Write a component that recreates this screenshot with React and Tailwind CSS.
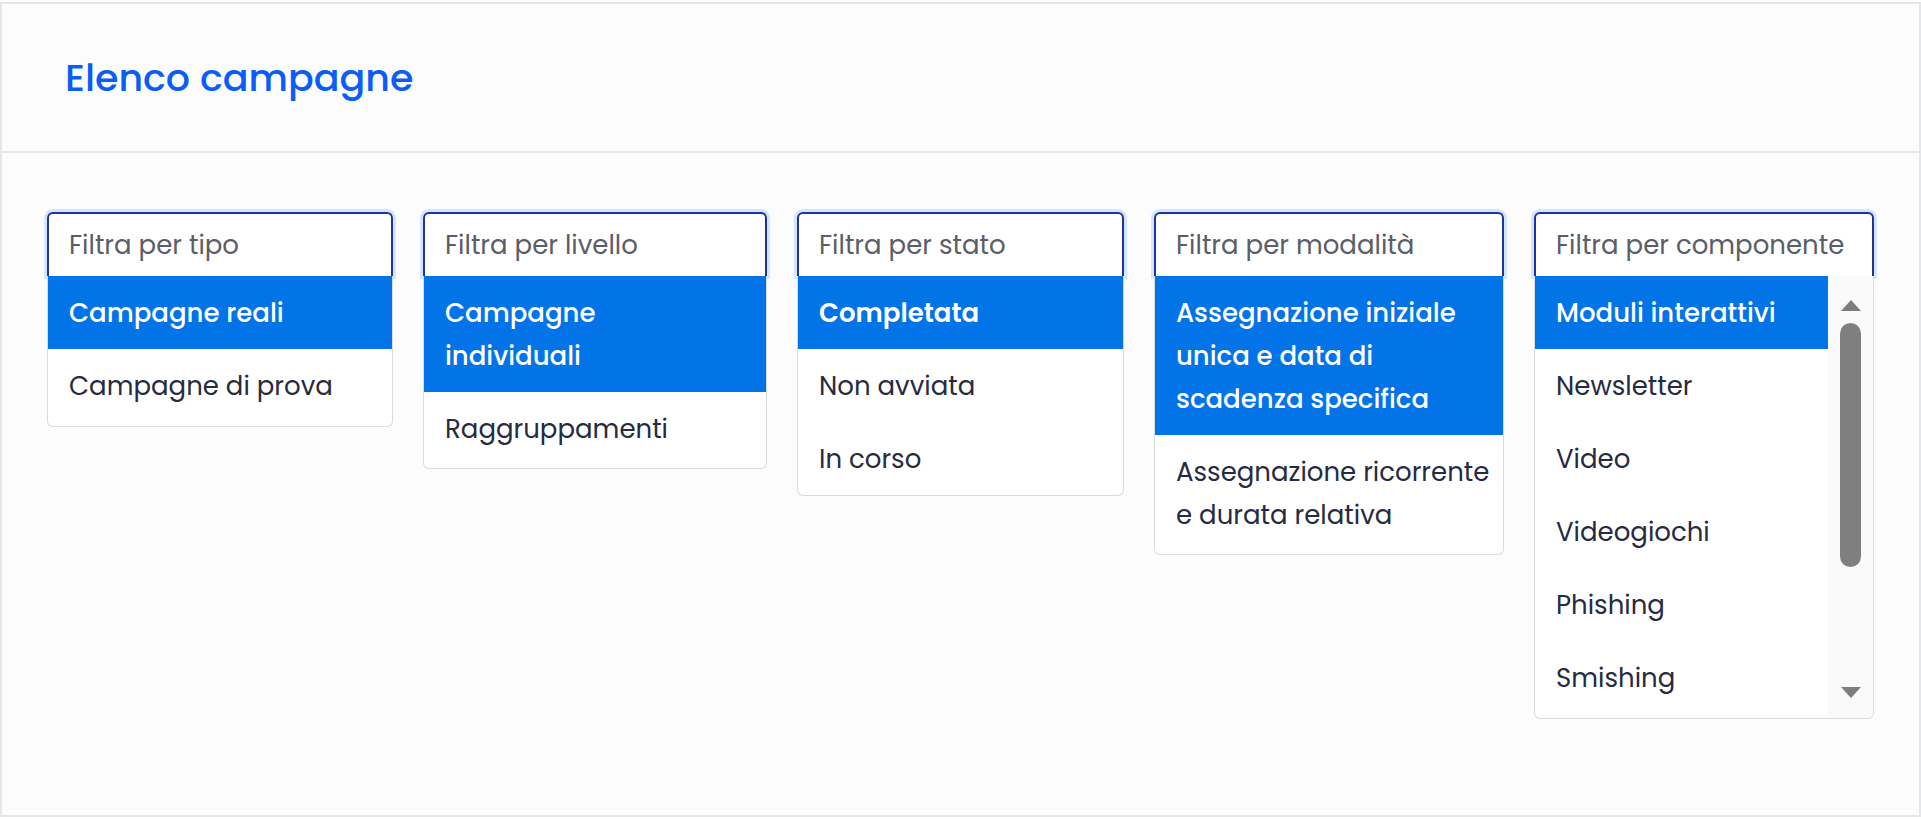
import React from 'react';

const filters = [
    {
        placeholder: 'Filtra per tipo',
        width: 'w-[346px]',
        pad: 'pb-[4px]',
        pr: 'pr-[8px]',
        options: [
            { label: 'Campagne reali', selected: true, weight: 'font-medium' },
            { label: 'Campagne di prova' },
        ],
    },
    {
        placeholder: 'Filtra per livello',
        width: 'w-[344px]',
        pad: 'pb-[3px]',
        pr: 'pr-[32px]',
        options: [
            { label: 'Campagne individuali', selected: true, weight: 'font-medium' },
            { label: 'Raggruppamenti' },
        ],
    },
    {
        placeholder: 'Filtra per stato',
        width: 'w-[327px]',
        pad: 'pb-0',
        pr: 'pr-[8px]',
        options: [
            { label: 'Completata', selected: true, weight: 'font-semibold' },
            { label: 'Non avviata' },
            { label: 'In corso' },
        ],
    },
    {
        placeholder: 'Filtra per modalità',
        width: 'w-[350px]',
        pad: 'pb-[3px]',
        pr: 'pr-[8px]',
        options: [
            { label: 'Assegnazione iniziale unica e data di scadenza specifica', selected: true, weight: 'font-medium' },
            { label: 'Assegnazione ricorrente e durata relativa' },
        ],
    },
];

const componentOptions = [
    { label: 'Moduli interattivi', selected: true, weight: 'font-medium' },
    { label: 'Newsletter' },
    { label: 'Video' },
    { label: 'Videogiochi' },
    { label: 'Phishing' },
    { label: 'Smishing' },
];

const Option = ({ label, selected, weight, pr = 'pr-[8px]' }) => (
    <div
        className={
            selected
                ? `bg-[#0373e8] text-white pl-[21px] ${pr} pt-[16px] pb-[14px] leading-[43px] ${weight}`
                : `text-[#272b42] pl-[21px] ${pr} pt-[16px] pb-[14px] leading-[43px]`
        }
    >
        {label}
    </div>
);

const FilterInput = ({ placeholder }) => (
    <div className="h-[64px] shrink-0 flex items-center px-[20px] bg-white rounded-t-[6px] border-2 border-b-0 border-[#1f31a3] shadow-[0_0_0_3px_#d3e6fb] text-[#5b5e67] whitespace-nowrap">
        {placeholder}
    </div>
);

const FilterList = ({ placeholder, width, pad, pr, options }) => (
    <div className={`${width} flex flex-col`}>
        <FilterInput placeholder={placeholder} />
        <div className={`bg-white border border-t-0 border-[#d8dbe2] rounded-b-[6px] ${pad}`}>
            {options.map((o) => (
                <Option key={o.label} pr={pr} {...o} />
            ))}
        </div>
    </div>
);

const ComponentList = () => (
    <div className="w-[340px] flex flex-col">
        <FilterInput placeholder="Filtra per componente" />
        <div className="h-[443px] bg-white border border-t-0 border-[#d8dbe2] rounded-b-[6px] flex overflow-hidden">
            <div className="flex-1 overflow-hidden">
                {componentOptions.map((o) => (
                    <Option key={o.label} {...o} />
                ))}
            </div>
            {/* scrollbar */}
            <div className="w-[45px] bg-[#fafafa] flex flex-col items-center pt-[24px] pb-[20px]">
                <svg width="20" height="11" viewBox="0 0 20 11">
                    <path d="M10 0 L20 11 L0 11 Z" fill="#7d7d7d" />
                </svg>
                <div className="w-[21px] h-[244px] mt-[12px] rounded-full bg-[#7f7f7f]" />
                <div className="flex-1" />
                <svg width="20" height="11" viewBox="0 0 20 11">
                    <path d="M0 0 L20 0 L10 11 Z" fill="#7d7d7d" />
                </svg>
            </div>
        </div>
    </div>
);

const App = () => {
    return (
        <div
            className="h-[819px] bg-white pt-[2px] text-[26px]"
            style={{ fontFamily: '"Poppins", "Inter", sans-serif' }}
        >
            <div className="h-[815px] bg-[#fcfcfc] border-2 border-[#e4e6ea] flex flex-col">
                <div className="h-[149px] shrink-0 border-b-2 border-[#e6e8ee] flex items-center px-[63px]">
                    <h1 className="text-[38px] font-medium text-[#0a5df6]">Elenco campagne</h1>
                </div>
                <div className="flex items-start gap-[30px] pl-[45px] pt-[59px]">
                    {filters.map((f) => (
                        <FilterList key={f.placeholder} {...f} />
                    ))}
                    <ComponentList />
                </div>
            </div>
        </div>
    );
};

export default App;
